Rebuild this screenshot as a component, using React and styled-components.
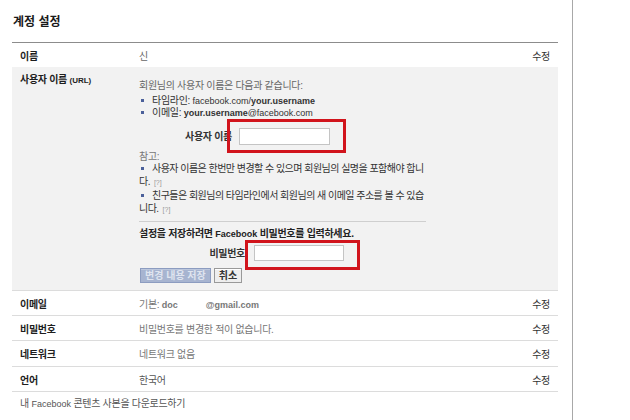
import React from "react";
import styled, { createGlobalStyle } from "styled-components";

const Global = createGlobalStyle`
  html, body { margin: 0; padding: 0; background: #fff; }
  body {
    font-family: "Liberation Sans", "Noto Sans CJK KR", sans-serif;
    font-size: 10px;
    letter-spacing: -0.3px;
    color: #333;
  }
`;

const Page = styled.div`
  width: 573px;
  height: 420px;
  border-right: 1px solid #a8a8a8;
  box-sizing: border-box;
  padding: 0 14px 0 12px;
  overflow: hidden;
`;

const Title = styled.h2`
  margin: 0;
  height: 43px;
  box-sizing: border-box;
  padding: 14px 0 0 1px;
  font-size: 12px;
  line-height: 16px;
  font-weight: bold;
  color: #1a1a1a;
  border-bottom: 1px solid #8c8c8c;
  letter-spacing: 0;
`;

const Row = styled.div`
  display: grid;
  grid-template-columns: 119px 1fr auto;
  align-items: center;
  height: ${(p) => p.$h || 25}px;
  box-sizing: border-box;
  padding: 0 8px;
  border-top: ${(p) => (p.$line ? "1px solid #dcdcdc" : "none")};
`;

const Label = styled.div`
  font-weight: bold;
  color: #1e1e1e;
`;

const Value = styled.div`
  color: ${(p) => p.$c || "#777"};
`;

const Edit = styled.div`
  color: #333;
`;

const Panel = styled.div`
  display: grid;
  grid-template-columns: 119px 287px;
  background: #f2f2f2;
  padding: 0 8px 10px;
  height: 223px;
  box-sizing: border-box;
`;

const PanelLabel = styled.div`
  padding-top: 7px;
  line-height: 12px;
  font-weight: bold;
  color: #1e1e1e;
`;

const Small = styled.span`
  font-size: 8px;
  letter-spacing: 0;
`;

const Content = styled.div`
  padding-top: 12px;
  display: flex;
  flex-direction: column;
`;

const Line = styled.div`
  line-height: 12px;
  color: ${(p) => p.$c || "#666"};
  margin-top: ${(p) => p.$mt || 0}px;
  font-weight: ${(p) => (p.$bold ? "bold" : "normal")};
`;

const List = styled.ul`
  list-style: none;
  margin: ${(p) => p.$mt || 0}px 0 0;
  padding: 0;
  display: flex;
  flex-direction: column;
  gap: ${(p) => p.$gap || 0}px;
`;

const Item = styled.li`
  line-height: ${(p) => p.$lh || 12}px;
  letter-spacing: ${(p) => (p.$dense ? -0.53 : -0.3)}px;
  color: #333;
  &::before {
    content: "";
    display: inline-block;
    vertical-align: middle;
    width: 3px;
    height: 3px;
    margin: -1px 8px 0 2px;
    background: #4b609a;
  }
`;

const Latin = styled.span`
  font-size: 9px;
  letter-spacing: 0;
  font-weight: ${(p) => (p.$bold ? "bold" : "inherit")};
  color: ${(p) => p.$c || "inherit"};
`;

const Help = styled.span`
  font-size: 7px;
  color: #999;
  letter-spacing: 0;
  margin-left: 4px;
`;

const FieldRow = styled.div`
  display: flex;
  align-items: center;
  margin-top: ${(p) => p.$mt}px;
`;

const FieldLabel = styled.label`
  width: ${(p) => p.$w}px;
  text-align: right;
  font-weight: bold;
  color: #333;
  padding-right: ${(p) => p.$gap}px;
  box-sizing: border-box;
  margin-top: -2px;
`;

const InputWrap = styled.div`
  position: relative;
`;

const Input = styled.input`
  display: block;
  width: ${(p) => p.$w}px;
  height: ${(p) => p.$h}px;
  box-sizing: border-box;
  border: 1px solid #c4c4c4;
  background: #fff;
  padding: 0 3px;
  margin: 0;
  font: inherit;
`;

const Highlight = styled.div`
  position: absolute;
  left: ${(p) => p.$l}px;
  top: ${(p) => p.$t}px;
  width: ${(p) => p.$w}px;
  height: ${(p) => p.$h}px;
  box-sizing: border-box;
  border: 3px solid #d1141c;
  pointer-events: none;
`;

const Divider = styled.hr`
  margin: 5px 0 0;
  border: 0;
  border-top: 1px solid #cfcfcf;
  height: 0;
`;

const Buttons = styled.div`
  display: flex;
  gap: 3px;
  margin-top: 7px;
  margin-left: 1px;
`;

const Button = styled.button`
  height: 15px;
  padding: 0 4px;
  font: inherit;
  font-weight: bold;
  line-height: 13px;
  border: 1px solid ${(p) => (p.$primary ? "#8c9cc0" : "#999")};
  background: ${(p) => (p.$primary ? "#a7b4d0" : "#eeeeee")};
  color: ${(p) => (p.$primary ? "#dfe4ef" : "#333")};
  box-shadow: inset 0 1px 0 ${(p) => (p.$primary ? "#bcc7dd" : "#fff")};
`;

const Footer = styled.div`
  border-top: 1px solid #dcdcdc;
  padding: 6px 8px 0;
  line-height: 12px;
  color: #555;
`;

const Gap = styled.span`
  display: inline-block;
  width: ${(p) => p.$w}px;
`;

export default function App() {
  return (
    <>
      <Global />
      <Page>
        <Title>계정 설정</Title>
        <Row $h={24}>
          <Label>이름</Label>
          <Value $c="#666">신</Value>
          <Edit>수정</Edit>
        </Row>
        <Panel>
          <PanelLabel>
            사용자 이름 <Small>(URL)</Small>
          </PanelLabel>
          <Content>
            <Line $mt={1}>회원님의 사용자 이름은 다음과 같습니다:</Line>
            <List $mt={3}>
              <Item>
                타임라인: <Latin>facebook.com/</Latin>
                <Latin $bold>your.username</Latin>
              </Item>
              <Item>
                이메일: <Latin $bold>your.username</Latin>
                <Latin>@facebook.com</Latin>
              </Item>
            </List>
            <FieldRow $mt={9}>
              <FieldLabel $w={100} $gap={7}>
                사용자 이름
              </FieldLabel>
              <InputWrap>
                <Input $w={91} $h={17} />
                <Highlight $l={-12} $t={-9} $w={119} $h={34} />
              </InputWrap>
            </FieldRow>
            <Line $mt={6} $c="#777">
              참고:
            </Line>
            <List $gap={1}>
              <Item $lh={12.5} $dense>
                사용자 이름은 한번만 변경할 수 있으며 회원님의 실명을 포함해야 합니다.
                <Help>[?]</Help>
              </Item>
              <Item $lh={12.5} $dense>
                친구들은 회원님의 타임라인에서 회원님의 새 이메일 주소를 볼 수 있습니다.
                <Help>[?]</Help>
              </Item>
            </List>
            <Divider />
            <Line $mt={6} $bold $c="#222">
              설정을 저장하려면 <Latin>Facebook</Latin> 비밀번호를 입력하세요.
            </Line>
            <FieldRow $mt={5}>
              <FieldLabel $w={115} $gap={9}>
                비밀번호
              </FieldLabel>
              <InputWrap>
                <Input type="password" $w={90} $h={16} />
                <Highlight $l={-9} $t={-5} $w={115} $h={30} />
              </InputWrap>
            </FieldRow>
            <Buttons>
              <Button $primary disabled>
                변경 내용 저장
              </Button>
              <Button>취소</Button>
            </Buttons>
          </Content>
        </Panel>
        <Row $line>
          <Label>이메일</Label>
          <Value>
            기본: <Latin $bold>doc</Latin>
            <Gap $w={28} />
            <Latin $bold>@gmail.com</Latin>
          </Value>
          <Edit>수정</Edit>
        </Row>
        <Row $line>
          <Label>비밀번호</Label>
          <Value>비밀번호를 변경한 적이 없습니다.</Value>
          <Edit>수정</Edit>
        </Row>
        <Row $line $h={26}>
          <Label>네트워크</Label>
          <Value>네트워크 없음</Value>
          <Edit>수정</Edit>
        </Row>
        <Row $line>
          <Label>언어</Label>
          <Value $c="#555">한국어</Value>
          <Edit>수정</Edit>
        </Row>
        <Footer>
          내 <Latin>Facebook</Latin> 콘텐츠 사본을 다운로드하기
        </Footer>
      </Page>
    </>
  );
}
